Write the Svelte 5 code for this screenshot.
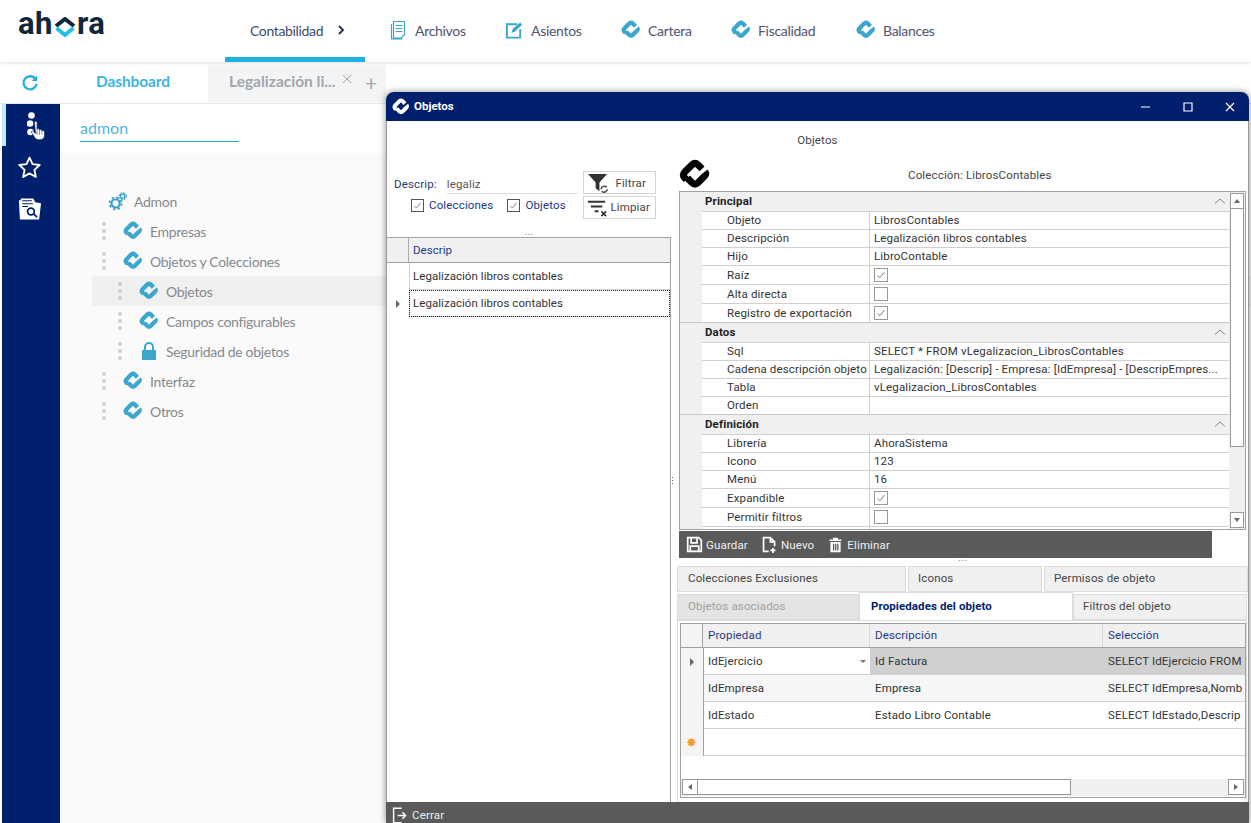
<script>
  const navItems = [
    { icon: 'doc', label: 'Archivos' },
    { icon: 'edit', label: 'Asientos' },
    { icon: 'mark', label: 'Cartera' },
    { icon: 'mark', label: 'Fiscalidad' },
    { icon: 'mark', label: 'Balances' }
  ];
  const tree = [
    { level: 1, icon: 'mark', label: 'Empresas' },
    { level: 1, icon: 'mark', label: 'Objetos y Colecciones' },
    { level: 2, icon: 'mark', label: 'Objetos', active: true },
    { level: 2, icon: 'mark', label: 'Campos configurables' },
    { level: 2, icon: 'lock', label: 'Seguridad de objetos' },
    { level: 1, icon: 'mark', label: 'Interfaz' },
    { level: 1, icon: 'mark', label: 'Otros' }
  ];
  const sections = [
    { title: 'Principal', rows: [
      { k: 'Objeto', v: 'LibrosContables' },
      { k: 'Descripción', v: 'Legalización libros contables' },
      { k: 'Hijo', v: 'LibroContable' },
      { k: 'Raíz', c: true },
      { k: 'Alta directa', c: false },
      { k: 'Registro de exportación', c: true }
    ]},
    { title: 'Datos', rows: [
      { k: 'Sql', v: 'SELECT * FROM vLegalizacion_LibrosContables' },
      { k: 'Cadena descripción objeto', v: 'Legalización: [Descrip] - Empresa: [IdEmpresa] - [DescripEmpres...' },
      { k: 'Tabla', v: 'vLegalizacion_LibrosContables' },
      { k: 'Orden', v: '' }
    ]},
    { title: 'Definición', rows: [
      { k: 'Librería', v: 'AhoraSistema' },
      { k: 'Icono', v: '123' },
      { k: 'Menú', v: '16' },
      { k: 'Expandible', c: true },
      { k: 'Permitir filtros', c: false }
    ]}
  ];
  const props = [
    { a: 'IdEjercicio', b: 'Id Factura', c: 'SELECT IdEjercicio FROM', cls: 'sel' },
    { a: 'IdEmpresa', b: 'Empresa', c: 'SELECT IdEmpresa,Nomb', cls: 'alt' },
    { a: 'IdEstado', b: 'Estado Libro Contable', c: 'SELECT IdEstado,Descrip', cls: '' }
  ];
</script>

{#snippet mark(cls)}
  <svg class={cls} viewBox="0 0 24 24" aria-hidden="true">
    <path d="M5.500 15.500 4.300 14.200Q2.300 12 4.300 9.800L9.800 4.300Q12 2.300 14.200 4.300L17.300 7.400" />
    <path d="M6.300 14.300 9.800 17.800Q12 19.800 14.200 17.800L19 13Q20.800 11.200 19.400 9.400" />
  </svg>
{/snippet}

{#snippet tick()}
  <svg class="tick" viewBox="0 0 14 14" aria-hidden="true"><path d="M3 7.500l2.600 2.800L11 3.600" /></svg>
{/snippet}

<div class="page">
  <header class="top">
    <div class="logo">
      <span>ah</span><svg class="logo-o" viewBox="0 0 24 20" aria-hidden="true"><path class="o1" d="M3 9 12 2l9 7" /><path class="o2" d="M3.500 11 12 18l8.500-7" /></svg><span>ra</span>
    </div>
    <div class="nav-current">Contabilidad <svg viewBox="0 0 10 12" aria-hidden="true"><path d="M3 2l4 4-4 4" /></svg></div>
    <nav class="nav">
      {#each navItems as item}
        <div class="nav-item">
          {#if item.icon === 'doc'}
            <svg class="nav-ico" viewBox="0 0 18 20" aria-hidden="true"><path d="M3.500 1.500h11v13l-3 3.500h-8zM5.500 5.500h7M5.500 8.500h7M5.500 11.500h7M1.500 4v15h11" /></svg>
          {:else if item.icon === 'edit'}
            <svg class="nav-ico fill" viewBox="0 0 20 20" aria-hidden="true"><path d="M1 3h12v2H3v12h12V9h2v10H1z" /><path d="M7 13l1-4 8-7 2 2.500-8 7.500z" /></svg>
          {:else}
            {@render mark('mark nav-mark')}
          {/if}
          <span>{item.label}</span>
        </div>
      {/each}
    </nav>
  </header>

  <div class="tabs">
    <div class="refresh">
      <svg viewBox="0 0 20 20" aria-hidden="true"><path d="M16 5.500A7.300 7.300 0 1 0 17.300 11" /><path class="solid" d="M17.800 1.800v6h-6z" /></svg>
    </div>
    <div class="tab-on">Dashboard</div>
    <div class="tab-off">
      <span>Legalización li...</span>
      <svg class="tab-x" viewBox="0 0 10 10" aria-hidden="true"><path d="M1 1l8 8M9 1l-8 8" /></svg>
      <span class="tab-plus">+</span>
    </div>
  </div>

  <div class="main">
    <aside class="side">
      <div class="side-btn on">
        <svg class="s1" viewBox="0 0 20 28" aria-hidden="true">
          <circle cx="4.500" cy="3.500" r="3.300" /><circle cx="3" cy="11.500" r="3.300" /><circle cx="3.500" cy="20" r="3.300" />
          <path class="hand" d="M7.500 10.500c0-1.700 2.600-1.700 2.600 0v7c0-1.400 2.400-1.400 2.400 0v1c0-1.400 2.400-1.400 2.400 0v1c0-1.400 2.600-1.200 2.600.3v3.700c0 2.500-1.500 4.300-4.800 4.300s-4.400-.8-5.700-3.500l-2.600-3.800c-.6-1.200 1-2 2-1l2.100 2z" />
          <path class="finger" d="M10.100 18.500v4M12.500 19.500v3M14.900 20.500v2" />
        </svg>
      </div>
      <div class="side-btn">
        <svg class="s2" viewBox="0 0 24 24" aria-hidden="true"><path d="M12 2.500l2.900 6.300 6.900.8-5.100 4.700 1.400 6.800-6.100-3.400-6.100 3.400 1.400-6.800L2.200 9.600l6.900-.8z" /></svg>
      </div>
      <div class="side-btn">
        <svg class="s3" viewBox="0 0 26 24" aria-hidden="true">
          <path class="white" d="M2 3h2V1h13l2 4 6 1-2 17H3z" />
          <path class="blue" d="M5.500 3h10v1h-10zM5.500 6h11v1h-11zM5.500 9h6v1h-6z" />
          <circle class="glass" cx="14.500" cy="14.500" r="3.500" /><path class="glass" d="M17 17l4 3.500" />
        </svg>
      </div>
    </aside>
    <section class="content">
      <div class="search"><div class="search-text">admon</div></div>
      <div class="tree">
        <div class="tree-root">
          <svg class="gear" viewBox="0 0 20 20" aria-hidden="true">
            <circle cx="8" cy="12" r="4.300" />
            <circle class="teeth" cx="8" cy="12" r="6.300" />
            <circle class="sm" cx="15.500" cy="4.500" r="2.400" />
            <circle class="smt" cx="15.500" cy="4.500" r="3.800" />
          </svg>
          <span>Admon</span>
        </div>
        {#each tree as node}
          <div class="tree-row" class:l2={node.level === 2} class:active={node.active}>
            <span class="dots"><i></i><i></i><i></i></span>
            {#if node.icon === 'lock'}
              <svg class="lock" viewBox="0 0 18 20" aria-hidden="true"><path d="M2 9h14v10H2z" /><path class="shackle" d="M5 9V6a4 4 0 0 1 8 0v3" /></svg>
            {:else}
              {@render mark('mark tree-mark')}
            {/if}
            <span>{node.label}</span>
          </div>
        {/each}
      </div>
    </section>
  </div>

  <div class="win">
    <div class="titlebar">
      {@render mark('mark win-mark')}
      <b>Objetos</b>
      <div class="win-ctl">
        <svg viewBox="0 0 12 12" aria-hidden="true"><path d="M1 6h9" /></svg>
        <svg viewBox="0 0 12 12" aria-hidden="true"><path d="M2 2h8v8H2z" /></svg>
        <svg viewBox="0 0 12 12" aria-hidden="true"><path d="M2 2l8 8M10 2l-8 8" /></svg>
      </div>
    </div>
    <div class="caption">Objetos</div>
    <div class="panes">
      <div class="left">
        <div class="filter">
          <div class="fields">
            <div class="descrip"><span>Descrip:</span><div class="input">legaliz</div></div>
            <div class="checks">
              <span class="chk on">{@render tick()}</span><span class="blue-t">Colecciones</span>
              <span class="chk on second">{@render tick()}</span><span class="blue-t">Objetos</span>
            </div>
          </div>
          <div class="btns">
            <div class="btn b1">
              <svg viewBox="0 0 24 22" aria-hidden="true"><path class="dk" d="M1 1h20l-8 9v9l-4-3v-6z" /><path class="ring" d="M14.800 17a3.300 3.300 0 0 1 5.800-2M21.200 17a3.300 3.300 0 0 1-5.800 2" /></svg>
              <span>Filtrar</span>
            </div>
            <div class="btn">
              <svg viewBox="0 0 24 22" aria-hidden="true"><path class="dk" d="M1 4h18v2H1zM4 9h12v2H4zM8 14h4v2H8z" /><path class="xx" d="M15 15l5 5M20 15l-5 5" /></svg>
              <span>Limpiar</span>
            </div>
          </div>
        </div>
        <div class="grip">...</div>
        <div class="grid-l">
          <div class="gl-head"><div class="rh"></div><div class="gl-cell">Descrip</div></div>
          <div class="gl-row"><div class="rh"></div><div class="gl-cell">Legalización libros contables</div></div>
          <div class="gl-row"><div class="rh"><i class="arrow"></i></div><div class="gl-cell focus">Legalización libros contables</div></div>
        </div>
      </div>
      <div class="splitter"><i></i><i></i><i></i></div>
      <div class="right">
        <div class="coll">
          {@render mark('mark big-mark')}
          <span>Colección: LibrosContables</span>
        </div>
        <div class="pg">
          <div class="pg-body">
            {#each sections as s}
              <div class="pg-sec">
                <b>{s.title}</b>
                <svg viewBox="0 0 12 8" aria-hidden="true"><path d="M1 6.500 6 2l5 4.500" /></svg>
              </div>
              {#each s.rows as r}
                <div class="pg-row" class:tall={'c' in r}>
                  <div class="pg-k">{r.k}</div>
                  <div class="pg-v">
                    {#if 'c' in r}
                      <span class="pchk">{#if r.c}{@render tick()}{/if}</span>
                    {:else}{r.v}{/if}
                  </div>
                </div>
              {/each}
            {/each}
            <div class="pg-row"><div class="pg-k"></div><div class="pg-v"></div></div>
          </div>
          <div class="vs">
            <div class="sb up"><i></i></div>
            <div class="thumb"></div>
            <div class="sb down"><i></i></div>
          </div>
        </div>
        <div class="toolbar">
          <span class="tool">
            <svg viewBox="0 0 20 20" aria-hidden="true"><path d="M2 2h13l3 3v13H2zM6 3v5h7V3M5 18v-6h10v6" /></svg>Guardar
          </span>
          <span class="tool">
            <svg viewBox="0 0 20 20" aria-hidden="true"><path d="M9 18H3V2h8l5 5v5M11 2v5h5M14 14v6M11 17h6" /></svg>Nuevo
          </span>
          <span class="tool">
            <svg viewBox="0 0 20 20" aria-hidden="true"><path class="wf" d="M3 4h14v2H3zM7 2h6v2H7zM4 7h12v12H4z" /><path class="df" d="M7 9h1.500v8H7zM9.500 9H11v8H9.500zM12 9h1.500v8H12z" /></svg>Eliminar
          </span>
        </div>
        <div class="grip g2">...</div>
        <div class="tabs-w">
          <div class="trow r1">
            <div class="t t1">Colecciones Exclusiones</div>
            <div class="t t2">Iconos</div>
            <div class="t t3">Permisos de objeto</div>
          </div>
          <div class="trow r2">
            <div class="t t4">Objetos asociados</div>
            <div class="t t5">Propiedades del objeto</div>
            <div class="t t6">Filtros del objeto</div>
          </div>
        </div>
        <div class="tabbox">
          <div class="dg">
            <div class="dg-head">
              <div class="dg-rh"></div>
              <div class="ca">Propiedad</div>
              <div class="cb">Descripción</div>
              <div class="cc">Selección</div>
            </div>
            {#each props as p, i}
              <div class="dg-row {p.cls}">
                <div class="dg-rh">{#if i === 0}<i class="arrow"></i>{/if}</div>
                <div class="ca">{p.a}{#if i === 0}<i class="combo"></i>{/if}</div>
                <div class="cb">{p.b}</div>
                <div class="cc">{p.c}</div>
              </div>
            {/each}
            <div class="dg-row">
              <div class="dg-rh star">✸</div>
              <div class="ca"></div><div class="cb"></div><div class="cc"></div>
            </div>
            <div class="hs">
              <div class="hb"><i class="al"></i></div>
              <div class="hthumb"></div>
              <div class="hb end"><i class="ar"></i></div>
            </div>
          </div>
        </div>
      </div>
    </div>
    <div class="footer">
      <svg viewBox="0 0 20 20" aria-hidden="true"><path d="M12 1H2v18h10M7 10h10M13 6l4 4-4 4" /></svg>
      <span>Cerrar</span>
    </div>
  </div>
</div>

<style>
  :global(body) { margin: 0; background: #fff; overflow: hidden; }
  i { display: block; font-style: normal; }
  .page { position: relative; width: 1251px; height: 823px; overflow: hidden; font-family: "Lato", "Open Sans", sans-serif; color: #555; }

  .top { height: 62px; display: flex; background: #fff; box-shadow: 0 1px 3px rgba(120,120,150,.25); position: relative; }
  .logo { width: 225px; padding: 5px 0 0 18px; box-sizing: border-box; display: flex; align-items: flex-start; font: 700 31px/38px "Roboto", sans-serif; color: #10263a; letter-spacing: .5px; }
  .logo-o { width: 24px; height: 20px; margin-top: 12px; flex: none; fill: none; stroke-width: 4; }
  .o1 { stroke: #10263a; }
  .o2 { stroke: #22bfe6; }
  .nav-current { width: 140px; box-sizing: border-box; padding: 22px 0 0 25px; height: 62px; border-bottom: 5px solid #1eb1e0; font-size: 14px; letter-spacing: -.35px; line-height: 18px; color: #3d4a68; display: flex; gap: 13px; align-items: flex-start; }
  .nav-current svg { width: 10px; height: 12px; margin-top: 2px; fill: none; stroke: #1d2b55; stroke-width: 1.800; }
  .nav { display: grid; grid-template-columns: 115px 116px 110px 125px 120px; margin-left: 25px; height: 62px; }
  .nav-item { display: flex; align-items: center; gap: 7px; font-size: 14px; letter-spacing: -.3px; color: #52526e; height: 60px; }
  .nav-ico { width: 18px; height: 20px; fill: none; stroke: #39a6cc; stroke-width: 1.200; }
  .nav-ico.fill { width: 19px; fill: #39a6cc; stroke: none; }
  .mark { fill: none; stroke: #3ba7cf; stroke-width: 5.200; stroke-linejoin: round; }
  .nav-mark { width: 20px; height: 20px; }

  .tabs { height: 38px; margin-top: 3px; display: flex; background: #fff; border-bottom: 1px solid #e6e6e6; box-sizing: content-box; }
  .refresh { width: 60px; display: flex; justify-content: center; align-items: center; padding-bottom: 2px; box-sizing: border-box; margin-right: 1px; }
  .refresh svg { width: 18px; height: 18px; fill: none; stroke: #27ade0; stroke-width: 2.600; }
  .refresh .solid { fill: #27ade0; stroke: none; }
  .tab-on { width: 147px; padding-right: 3px; box-sizing: border-box; text-align: center; line-height: 33px; font-weight: 700; font-size: 15.500px; letter-spacing: -.1px; color: #3db4e4; }
  .tab-off { width: 178px; background: #f3f4f6; display: flex; align-items: flex-start; font-weight: 700; font-size: 15.500px; line-height: 33px; color: #a3a6a9; padding-left: 21px; box-sizing: border-box; position: relative; height: 37px; }
  .tab-x { position: absolute; left: 134px; top: 9px; width: 10px; height: 10px; fill: none; stroke: #9a9a9a; stroke-width: .9; }
  .tab-plus { position: absolute; left: 157px; top: 7px; font-weight: 400; font-size: 21px; color: #a3a6a9; line-height: 22px; }

  .main { display: flex; height: 719px; }
  .side { width: 58px; margin-left: 2px; background: #001f6d; flex: none; display: flex; flex-direction: column; align-items: center; }
  .side-btn { height: 42px; width: 100%; display: flex; justify-content: center; align-items: center; box-sizing: border-box; padding-right: 4px; }
  .side-btn.on { border-left: 4px solid #bfeaf8; padding-right: 0; }
  .s1 { width: 20px; height: 28px; fill: #fff; margin-left: 8px; margin-top: 2px; }
  .hand { stroke: #001f6d; stroke-width: .7; }
  .finger { fill: none; stroke: #001f6d; stroke-width: .6; }
  .s2 { width: 25px; height: 25px; fill: none; stroke: #fff; stroke-width: 1.800; stroke-linejoin: round; }
  .s3 { width: 25px; height: 24px; }
  .s3 .white { fill: #fff; }
  .s3 .blue { fill: #001f6d; }
  .s3 .glass { fill: none; stroke: #001f6d; stroke-width: 1.800; }

  .content { flex: 1; background: #fafafa; }
  .search { height: 49px; background: #fff; padding-left: 20px; }
  .search-text { width: 159px; border-bottom: 1px solid #27a7dc; box-sizing: border-box; font-size: 16px; line-height: 48px; height: 38px; color: #4fb3e0; }
  .tree { padding: 33px 0 0 32px; font-size: 14px; letter-spacing: -.3px; color: #85898e; }
  .tree-root { height: 30px; display: flex; align-items: center; gap: 7px; padding-left: 16px; }
  .gear { width: 19px; height: 19px; fill: none; stroke: #3ba0cc; stroke-width: 2.200; }
  .gear .teeth { stroke-width: 2; stroke-dasharray: 2.500 2.450; }
  .gear .sm { stroke-width: 1.500; }
  .gear .smt { stroke-width: 1.300; stroke-dasharray: 1.500 1.500; }
  .tree-row { height: 30px; display: flex; align-items: center; padding-left: 10px; }
  .tree-row.l2 { padding-left: 26px; }
  .tree-row.active { background: #f0f0f0; }
  .dots { width: 4px; margin-right: 18px; display: flex; flex-direction: column; gap: 3px; }
  .dots i { width: 4px; height: 4px; border-radius: 50%; background: #cfcfcf; }
  .tree-mark { width: 20px; height: 20px; margin-left: -1px; margin-right: 7px; }
  .lock { width: 18px; height: 20px; margin-right: 8px; fill: #3ba7cf; }
  .lock .shackle { fill: none; stroke: #3ba7cf; stroke-width: 2; }

  .win { position: absolute; left: 386px; top: 92px; width: 863px; height: 731px; background: #fff; border-radius: 8px 8px 0 0; box-shadow: 0 0 7px rgba(0,0,0,.45); display: flex; flex-direction: column; overflow: hidden; font-family: "Roboto", "Liberation Sans", sans-serif; font-size: 11.500px; letter-spacing: .15px; color: #333; }
  .titlebar { height: 29px; background: #001f6d; display: flex; align-items: center; padding-left: 6px; color: #fff; flex: none; }
  .titlebar b { margin-left: 4px; font-size: 11.500px; padding-bottom: 2px; letter-spacing: 0; }
  .win-mark { width: 18px; height: 18px; stroke: #fff; }
  .win-ctl { margin-left: auto; display: flex; gap: 30px; padding-right: 13px; }
  .win-ctl svg { width: 12px; height: 12px; fill: none; stroke: #fff; stroke-width: 1.200; }
  .caption { height: 39px; text-align: center; line-height: 39px; flex: none; color: #444; border-left: 1px solid #9a9a9a; border-right: 1px solid #9a9a9a; }
  .panes { flex: 1; display: flex; min-height: 0; border-left: 1px solid #9a9a9a; border-right: 1px solid #9a9a9a; }

  .left { width: 284px; flex: none; display: flex; flex-direction: column; }
  .filter { display: flex; height: 72px; padding-top: 11px; box-sizing: border-box; }
  .fields { width: 196px; padding-left: 7px; box-sizing: border-box; }
  .descrip { display: flex; height: 22px; line-height: 26px; color: #1f3a6e; }
  .input { margin-left: 10px; width: 131px; border-bottom: 1px solid #ddd; color: #555; height: 22px; }
  .checks { display: flex; align-items: center; margin-top: 5px; padding-left: 17px; height: 14px; }
  .chk { width: 13px; height: 13px; border: 1px solid #555; box-sizing: border-box; margin-right: 5px; }
  .chk.second { margin-left: 14px; }
  .blue-t { color: #22378a; }
  .tick { width: 100%; height: 100%; display: block; fill: none; stroke: #666; stroke-width: 1; }
  .btns { width: 73px; display: flex; flex-direction: column; gap: 2px; }
  .btn { height: 23px; border: 1px solid #d4d4d4; box-sizing: border-box; display: flex; align-items: center; justify-content: space-between; padding: 0 5px 1px 3px; color: #444; }
  .btn.b1 { padding: 0 9px 0 3px; line-height: 22px; align-items: flex-start; }
  .btn.b1 svg { margin-top: 1px; }
  .btn svg { width: 23px; height: 21px; flex: none; }
  .btn .dk { fill: #333; }
  .btn .ring { fill: none; stroke: #444; stroke-width: 1.600; }
  .btn .xx { stroke: #333; stroke-width: 1.800; fill: none; }
  .grip { height: 5px; text-align: center; line-height: 0; color: #888; font-size: 11px; flex: none; }
  .grid-l { flex: 1; border-top: 1px solid #a0a0a0; border-right: 1px solid #a0a0a0; background: #fff; }
  .gl-head { display: flex; height: 24px; background: #f0f0f0; border-bottom: 1px solid #a0a0a0; color: #1f3a8a; box-sizing: content-box; }
  .gl-row { display: flex; height: 27px; }
  .rh { width: 21px; flex: none; border-right: 1px solid #aaa; display: flex; align-items: center; justify-content: center; }
  .gl-row .rh { border-right: 0; width: 22px; }
  .gl-cell { flex: 1; padding-left: 4px; line-height: 24px; letter-spacing: .05px; }
  .gl-row .gl-cell { padding-left: 3px; line-height: 26px; border-bottom: 1px solid #d0d0d0; border-left: 1px solid #d0d0d0; }
  .gl-cell.focus { outline: 1px dotted #222; outline-offset: -1px; }
  .arrow { width: 0; height: 0; border-left: 4px solid #666; border-top: 4px solid transparent; border-bottom: 4px solid transparent; }
  .splitter { width: 6px; flex: none; box-sizing: border-box; padding: 317px 0 0 1px; display: flex; flex-direction: column; gap: 2px; }
  .splitter i { width: 1px; height: 1px; background: #666; }

  .right { flex: 1; min-width: 0; display: flex; flex-direction: column; }
  .coll { height: 31px; display: flex; position: relative; flex: none; }
  .coll span { position: absolute; left: 231px; top: 8px; color: #444; }
  .big-mark { width: 32px; height: 32px; margin-left: 2px; margin-top: -1px; stroke: #000; }
  .pg { margin-left: 2px; width: 567px; height: 339px; border: 1px solid #a0a0a0; box-sizing: border-box; display: flex; overflow: hidden; flex: none; background: #f0f0f0; }
  .pg-body { flex: 1; min-width: 0; overflow: hidden; }
  .pg-sec { padding: 0 0 2px 25px; display: flex; justify-content: space-between; align-items: center; border-top: 1px solid #c8c8c8; box-sizing: border-box; height: 20px; background: #f0f0f0; color: #222; }
  .pg-sec:first-child { border-top: 0; height: 19px; }
  .pg-sec svg { width: 12px; height: 8px; margin-right: 3px; fill: none; stroke: #888; stroke-width: 1; }
  .pg-row { height: 17px; margin-left: 22px; display: flex; background: #fff; border-top: 1px solid #d0d0d0; line-height: 17px; }
  .pg-row.tall { height: 18px; line-height: 19px; }
  .pg-k { width: 168px; padding-left: 25px; box-sizing: border-box; border-right: 1px solid #d0d0d0; flex: none; color: #333; white-space: nowrap; overflow: hidden; }
  .pg-v { flex: 1; padding-left: 4px; white-space: nowrap; overflow: hidden; color: #333; }
  .pchk { display: block; width: 14px; height: 14px; margin-top: 2px; border: 1px solid #999; box-sizing: border-box; background: #fff; }
  .vs { width: 16px; flex: none; display: flex; flex-direction: column; padding: 1px; box-sizing: border-box; background: #f0f0f0; }
  .sb { height: 16px; border: 1px solid #999; box-sizing: border-box; background: #fff; display: flex; align-items: center; justify-content: center; flex: none; }
  .sb.up i { border-left: 3px solid transparent; border-right: 3px solid transparent; border-bottom: 4px solid #666; width: 0; }
  .sb.down { margin-top: auto; }
  .sb.down i { border-left: 3px solid transparent; border-right: 3px solid transparent; border-top: 4px solid #666; width: 0; }
  .thumb { height: 238px; border: 1px solid #999; border-top: 0; box-sizing: border-box; background: #fff; }

  .toolbar { margin-left: 2px; width: 533px; height: 27px; margin-top: 1px; background: #5a5a5a; color: #f0f0f0; display: flex; align-items: center; padding-left: 7px; box-sizing: border-box; gap: 13px; flex: none; }
  .tool { display: flex; align-items: center; gap: 3px; }
  .tool svg { width: 17px; height: 17px; fill: none; stroke: #fff; stroke-width: 2; }
  .tool .wf { fill: #fff; stroke: none; }
  .tool .df { fill: #5a5a5a; stroke: none; }
  .g2 { height: 8px; line-height: 0; }
  .tabs-w { flex: none; color: #444; }
  .trow { display: flex; height: 26px; }
  .r1 { gap: 2px; margin-bottom: 2px; }
  .t { background: #f0f0f0; border: 1px solid #dcdcdc; box-sizing: border-box; line-height: 23px; padding-left: 10px; }
  .t1 { width: 229px; }
  .t2 { width: 134px; padding-left: 9px; }
  .t3 { width: 204px; padding-left: 9px; }
  .t4 { width: 182px; background: #e4e4e4; color: #a0a0a0; }
  .t5 { width: 214px; background: #fff; font-weight: 700; color: #001f6d; height: 28px; margin-top: -2px; line-height: 26px; border-bottom: 0; padding-left: 11px; position: relative; z-index: 1; letter-spacing: .1px; }
  .t6 { width: 174px; padding-left: 9px; }
  .tabbox { flex: 1; width: 570px; border: 1px solid #dcdcdc; border-bottom: 0; padding: 2px 2px 4px 2px; box-sizing: border-box; min-height: 0; }
  .dg { height: 175px; width: 566px; border: 1px solid #a0a0a0; box-sizing: border-box; background: #fff; display: flex; flex-direction: column; overflow: hidden; position: relative; }
  .dg-head { display: flex; height: 24px; box-sizing: border-box; background: #f0f0f0; border-bottom: 1px solid #a0a0a0; color: #1f3a8a; line-height: 22px; flex: none; }
  .dg-head .dg-rh { border-right: 1px solid #a0a0a0; }
  .dg-rh { width: 22px; box-sizing: border-box; flex: none; background: #f4f4f4; display: flex; align-items: center; justify-content: center; }
  .dg-head .ca, .dg-head .cb { border-right: 1px solid #d8d8d8; }
  .ca { width: 167px; padding-left: 5px; box-sizing: border-box; flex: none; position: relative; }
  .cb { width: 233px; padding-left: 5px; box-sizing: border-box; flex: none; }
  .cc { flex: 1; padding-left: 5px; white-space: nowrap; overflow: hidden; }
  .dg-row { display: flex; height: 27px; line-height: 26px; flex: none; box-sizing: border-box; }
  .dg-row > .ca, .dg-row > .cb, .dg-row > .cc { border-bottom: 1px solid #d0d0d0; }
  .dg-row > .ca { border-left: 1px solid #a0a0a0; padding-left: 4px; }
  .dg-row.sel .cb, .dg-row.sel .cc { background: #d0d0d0; }
  .dg-row.alt .ca, .dg-row.alt .cb, .dg-row.alt .cc { background: #f4f6f8; }
  .star { color: #f59a23; font-size: 13px; }
  .combo { position: absolute; right: 4px; top: 12px; border-left: 3px solid transparent; border-right: 3px solid transparent; border-top: 3px solid #777; width: 0; }
  .hs { margin-top: auto; height: 17px; background: #f0f0f0; display: flex; padding: 0 1px 1px; box-sizing: border-box; margin-bottom: 1px; }
  .hb { width: 16px; border: 1px solid #999; box-sizing: border-box; background: #fff; display: flex; align-items: center; justify-content: center; flex: none; }
  .hb.end { margin-left: auto; }
  .al { border-top: 3px solid transparent; border-bottom: 3px solid transparent; border-right: 4px solid #666; }
  .ar { border-top: 3px solid transparent; border-bottom: 3px solid transparent; border-left: 4px solid #666; }
  .hthumb { width: 373px; border: 1px solid #999; border-left: 0; box-sizing: border-box; background: #fff; }

  .footer { height: 21px; background: #5a5a5a; color: #eee; display: flex; align-items: flex-start; gap: 4px; padding: 6px 0 0 6px; box-sizing: border-box; flex: none; overflow: hidden; }
  .footer svg { width: 16px; height: 19px; flex: none; margin-top: -2px; fill: none; stroke: #fff; stroke-width: 1.800; }
</style>
